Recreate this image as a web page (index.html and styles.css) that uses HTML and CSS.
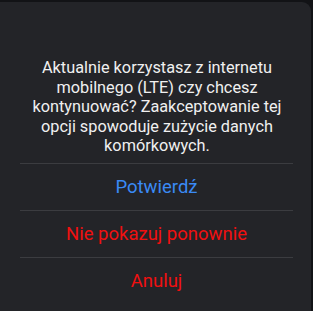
FILE: index.html
```html
<!DOCTYPE html>
<html>
<head>
    <meta charset="utf-8">
    <title>LTE dialog</title>
    <link rel="stylesheet" href="styles.css">
</head>
<body>
    <div class="dialog">
        <p class="message">Aktualnie korzystasz z internetu mobilnego (LTE) czy chcesz kontynuować? Zaakceptowanie tej opcji spowoduje zużycie danych komórkowych.</p>
        <div class="actions">
            <button type="button" class="action confirm">Potwierdź</button>
            <button type="button" class="action danger">Nie pokazuj ponownie</button>
            <button type="button" class="action danger">Anuluj</button>
        </div>
    </div>
</body>
</html>
```

FILE: styles.css
```css
html, body { margin: 0; padding: 0; height: 100%; background: #121316; }
body { font-family: Roboto, "Noto Sans", sans-serif; overflow: hidden; }
.dialog { margin: 2px 2px 0 0; height: 309px; background: #232428; border-top-right-radius: 9px; display: flex; flex-direction: column; }
.message { margin: 0; padding: 56px 20px 7px 23px; color: #f0f0f0; font-size: 16.3px; line-height: 19.5px; text-align: center; }
.actions { display: flex; flex-direction: column; }
.action { height: 47px; margin: 0 18px 0 20px; padding: 0; border: none; border-top: 1px solid #3b3c40; background: none; font-family: inherit; font-size: 18.5px; cursor: pointer; }
.confirm { color: #3a8af5; }
.danger { color: #f01010; }
```
